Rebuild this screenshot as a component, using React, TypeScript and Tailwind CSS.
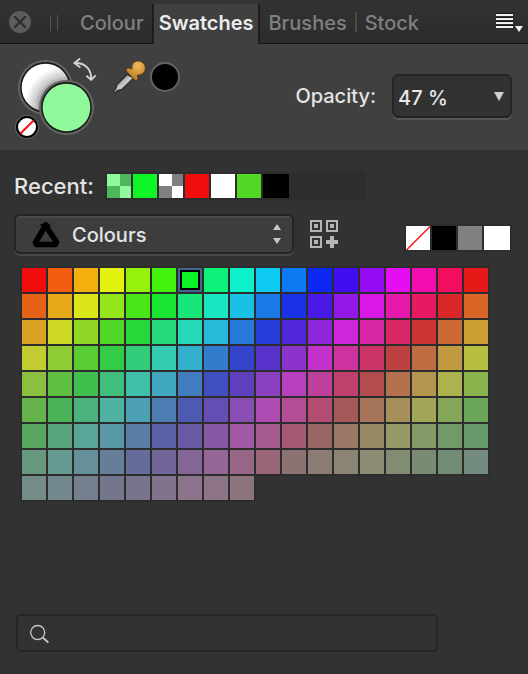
import { useState } from "react";

const HUES = 17;
const PALETTE = Array.from({ length: 153 }, (_, i) => {
  const saturation = 90 - 10 * Math.floor(i / HUES);
  const hue = ((i % HUES) * 360) / HUES;
  return `hsl(${hue.toFixed(1)} ${saturation}% 50%)`;
});

function Checker({ light, dark }: { light: string; dark: string }) {
  return (
    <svg viewBox="0 0 24 24" className="size-full" shapeRendering="crispEdges" aria-hidden="true">
      <rect width="24" height="24" fill={light} />
      <path d="M13 0h11v12H13zM0 12h13v12H0z" fill={dark} />
    </svg>
  );
}

function Header() {
  const idle = "h-full pt-0.5 text-[#808080]";
  return (
    <header className="flex h-11 items-end border-b border-[#151515] bg-linear-to-b from-[#333333] to-[#2b2b2b]">
      <button aria-label="Close panel" className="mb-2.5 ml-[9px] size-[22px] shrink-0">
        <svg viewBox="0 0 22 22" className="size-full">
          <circle cx="11" cy="11" r="11" fill="#5c5c5c" />
          <path d="M6 6l10 10M16 6L6 16" stroke="#2b2b2b" strokeWidth="2.2" strokeLinecap="round" />
        </svg>
      </button>
      <div className="mb-3 ml-[19px] h-4 w-2 shrink-0 border-x border-[#555555]" />
      <div role="tablist" aria-label="Panels" className="flex h-full min-w-0 flex-1 items-end">
        <button role="tab" aria-selected="false" className={`${idle} pr-2 pl-[22px]`}>
          Colour
        </button>
        <button
          role="tab"
          aria-selected="true"
          className="-mb-px h-10 shrink-0 border-x-2 border-[#1d1d1d] bg-[#404040] px-[5px] pb-0.5 font-semibold text-[#ececec]"
        >
          Swatches
        </button>
        <button role="tab" aria-selected="false" className={`${idle} px-2`}>
          Brushes
        </button>
        <div className="mb-[11px] h-5 w-0.5 shrink-0 bg-[#4a4a4a]" />
        <button role="tab" aria-selected="false" className={`${idle} px-2`}>
          Stock
        </button>
      </div>
      <button aria-label="Panel menu" className="mr-1 mb-2.5 h-5 w-7 shrink-0">
        <svg viewBox="0 0 28 20" className="size-full" shapeRendering="crispEdges">
          <path d="M0 1h17M0 5h17M0 9h17M0 13h17" stroke="#151515" strokeWidth="2" />
          <path d="M0 2h17M0 6h17M0 10h17M0 14h17" stroke="#f0f0f0" strokeWidth="2" />
          <path d="M19 13h8l-4 6z" fill="#f0f0f0" shapeRendering="auto" />
        </svg>
      </button>
    </header>
  );
}

function ColourWells() {
  return (
    <div className="relative h-[84px] w-[84px] shrink-0">
      <button aria-label="Stroke colour" className="absolute top-1 left-0.5 size-[55px]">
        <svg viewBox="0 0 55 55" className="size-full">
          <defs>
            <radialGradient id="wellShade" gradientUnits="userSpaceOnUse" cx="48" cy="48" r="42">
              <stop offset="0.58" stopColor="#8c8c8c" />
              <stop offset="0.76" stopColor="#cfcfcf" />
              <stop offset="1" stopColor="#ffffff" />
            </radialGradient>
          </defs>
          <circle cx="27.5" cy="27.5" r="27.5" fill="#636363" />
          <circle cx="27.5" cy="27.5" r="24.6" fill="url(#wellShade)" stroke="#1c1c1c" strokeWidth="1.6" />
        </svg>
      </button>
      <button aria-label="Fill colour" className="absolute top-6 left-[23px] size-[55px]">
        <svg viewBox="0 0 55 55" className="size-full">
          <circle cx="27.5" cy="27.5" r="27.5" fill="#636363" />
          <circle cx="27.5" cy="27.5" r="24.6" fill="#90f99b" stroke="#1c1c1c" strokeWidth="1.6" />
        </svg>
      </button>
      <button aria-label="No colour" className="absolute top-[59px] -left-px size-6">
        <svg viewBox="0 0 24 24" className="size-full">
          <circle cx="12" cy="12" r="12" fill="#636363" />
          <circle cx="12" cy="12" r="10" fill="#ffffff" stroke="#000000" strokeWidth="2" />
          <path d="M5.5 18.5l13-13" stroke="#fa1414" strokeWidth="2.2" />
        </svg>
      </button>
      <button aria-label="Swap colours" className="absolute top-0.5 left-[57px] size-6">
        <svg viewBox="0 0 24 24" className="size-full" fill="none" stroke="#d4d4d4" strokeWidth="1.9" strokeLinecap="round" strokeLinejoin="round">
          <path d="M1.5 5C12 4.500 18.500 11 18.200 21.500" />
          <path d="M6.500 1L1.500 5l5.200 4M14 18.300l4.200 3.600 4-4" />
        </svg>
      </button>
    </div>
  );
}

function Toolbar() {
  return (
    <section className="flex h-[106px] items-start bg-[#404040] pt-3 pr-4 pl-4">
      <ColourWells />
      <button aria-label="Colour picker" className="mt-1 ml-3 size-[34px] shrink-0">
        <svg viewBox="0 0 34 34" className="size-full">
          <defs>
            <linearGradient id="glass" x1="0" y1="0" x2="1" y2="1">
              <stop offset="0.3" stopColor="#8a8a8a" />
              <stop offset="0.5" stopColor="#cccccc" />
              <stop offset="0.8" stopColor="#777777" />
            </linearGradient>
            <radialGradient id="bulb" cx="0.6" cy="0.25" r="0.8">
              <stop offset="0" stopColor="#efbb5a" />
              <stop offset="1" stopColor="#b07416" />
            </radialGradient>
          </defs>
          <path d="M15 14.500L5 24.500 3.800 28.700 1.500 31.200 3 32.700 5.300 30.500 10.300 29.300 21.800 18z" fill="url(#glass)" stroke="#292929" strokeWidth="1.200" />
          <path d="M14.500 9c1.800-2 3.400-.3 5.700.2C18.800 5 21.800 1 26 1c4 0 7.300 3 7.300 7s-3.300 7.500-7.800 7c-.5 1.600 1.300 3.200-.3 5.200-1.300 1-2.400-.2-3.500-1.200L16 13c-1.100-1.100-2.500-2.600-1.500-4z" fill="url(#bulb)" stroke="#493314" strokeWidth="0.700" />
        </svg>
      </button>
      <button aria-label="Picked colour" className="mt-1.5 ml-1 size-[30px] shrink-0 rounded-full border-2 border-[#636363] bg-black" />
      <div className="mt-[18px] ml-auto flex items-center gap-4">
        <label htmlFor="opacity" className="text-[#e4e4e4]">
          Opacity:
        </label>
        <div className="relative">
          <select
            id="opacity"
            defaultValue="47"
            className="h-11 w-[120px] appearance-none rounded-md border-2 border-[#242424] bg-[#323232] px-1 pt-1 text-[#e8e8e8] shadow-[0_2px_0_#555555]"
          >
            <option value="0">0 %</option>
            <option value="47">47 %</option>
            <option value="100">100 %</option>
          </select>
          <svg viewBox="0 0 10 9" className="pointer-events-none absolute top-[18px] right-2 h-[9px] w-2.5">
            <path d="M0 0h10L5 9z" fill="#d0d0d0" />
          </svg>
        </div>
      </div>
    </section>
  );
}

function RecentRow() {
  const cell = "size-6";
  return (
    <div className="flex h-7 items-center gap-[11px]">
      <h2 className="text-[22px] text-[#e4e4e4]">Recent:</h2>
      <div className="flex h-7 w-[261px] gap-0.5 bg-[#2d2d2d] p-0.5">
        <button aria-label="Light green, 47 %" className={cell}>
          <Checker light="#90f99b" dark="#4cb85a" />
        </button>
        <button aria-label="Green" className={`${cell} bg-[#0df527]`} />
        <button aria-label="White, transparent" className={cell}>
          <Checker light="#ffffff" dark="#808080" />
        </button>
        <button aria-label="Red" className={`${cell} bg-[#f20d0d]`} />
        <button aria-label="White" className={`${cell} bg-white`} />
        <button aria-label="Leaf green" className={`${cell} bg-[#52d926]`} />
        <button aria-label="Black" className="h-6 w-[26px] bg-black" />
      </div>
    </div>
  );
}

function PaletteBar() {
  return (
    <div className="mt-3.5 flex items-start">
      <div className="relative w-[280px]">
        <select
          aria-label="Palette"
          className="h-10 w-full appearance-none rounded-md border-2 border-[#242424] bg-[#3d3d3d] pt-0.5 pl-14 text-[#e4e4e4] shadow-[inset_0_2px_0_#4a4a4a,0_2px_0_#484848]"
        >
          <option>Colours</option>
        </select>
        <svg viewBox="0 0 28 26" className="pointer-events-none absolute top-2 left-[18px] h-[26px] w-7">
          <path d="M13.500 3.500L3.500 20.500 4.500 22.500 23.500 22.500 24.500 20z" fill="none" stroke="#000000" strokeWidth="5.500" strokeLinejoin="round" />
          <path d="M11 3l3-1.500L17 4l-1 2z" fill="#000000" stroke="#000000" strokeWidth="3" />
        </svg>
        <svg viewBox="0 0 8 20" className="pointer-events-none absolute top-2.5 right-[13px] h-5 w-2">
          <path d="M0 6h8L4 0zM0 14h8l-4 6z" fill="#c8c8c8" />
        </svg>
      </div>
      <button aria-label="Add colour to palette" className="mt-1.5 ml-4 size-7">
        <svg viewBox="0 0 28 28" className="size-full" shapeRendering="crispEdges">
          <path d="M1 1h10v10H1zM17 1h10v10H17zM1 17h10v10H1z" fill="none" stroke="#b4b4b4" strokeWidth="2" />
          <path d="M4 4h4v4H4zM20 4h4v4h-4zM4 20h4v4H4zM20 16h4v4h4v4h-4v4h-4v-4h-4v-4h4z" fill="#b4b4b4" />
        </svg>
      </button>
      <div className="mt-2.5 ml-auto flex gap-0.5 bg-[#2d2d2d] p-0.5">
        <button aria-label="None" className="size-6 bg-white">
          <svg viewBox="0 0 24 24" className="size-full">
            <path d="M0.500 24L24 0.500" stroke="#fa1414" strokeWidth="1.400" />
          </svg>
        </button>
        <button aria-label="Black" className="size-6 bg-black" />
        <button aria-label="Grey" className="size-6 bg-[#808080]" />
        <button aria-label="White" className="h-6 w-[26px] bg-white" />
      </div>
    </div>
  );
}

function SwatchGrid() {
  const [selected, setSelected] = useState(6);
  return (
    <div className="mt-3.5 ml-2 grid grid-cols-[repeat(18,24px)] gap-0.5">
      {PALETTE.map((colour, i) => (
        <button
          key={i}
          aria-label={`Swatch ${i + 1}`}
          aria-pressed={i === selected}
          onClick={() => setSelected(i)}
          className={
            i === selected
              ? "size-6 bg-[#43658f] p-0.5 shadow-[0_0_0_2px_#2d2d2d]"
              : "size-6 shadow-[0_0_0_2px_#2d2d2d]"
          }
          style={i === selected ? undefined : { backgroundColor: colour }}
        >
          {i === selected && (
            <span className="block size-5 border-2 border-black" style={{ backgroundColor: colour }} />
          )}
        </button>
      ))}
    </div>
  );
}

export default function App() {
  return (
    <div className="flex min-h-screen flex-col bg-[#323232] font-[Inter,'Liberation_Sans',sans-serif] text-xl font-medium">
      <Header />
      <Toolbar />
      <main className="flex flex-1 flex-col pt-[22px] pr-4 pb-[22px] pl-3.5">
        <RecentRow />
        <PaletteBar />
        <SwatchGrid />
        <div className="relative mt-auto mr-[74px] ml-0.5">
          <input
            type="search"
            aria-label="Search swatches"
            className="block h-[38px] w-full rounded-[5px] border-2 border-[#262626] bg-transparent pr-3 pl-11 text-[#e4e4e4] outline-none"
          />
          <svg viewBox="0 0 20 20" className="pointer-events-none absolute top-2.5 left-3.5 size-5" fill="none" stroke="#c8c8c8" strokeWidth="1.300">
            <circle cx="7.700" cy="8.500" r="7" />
            <path d="M12.700 13.500l5.700 5" strokeWidth="1.700" />
          </svg>
        </div>
      </main>
    </div>
  );
}
